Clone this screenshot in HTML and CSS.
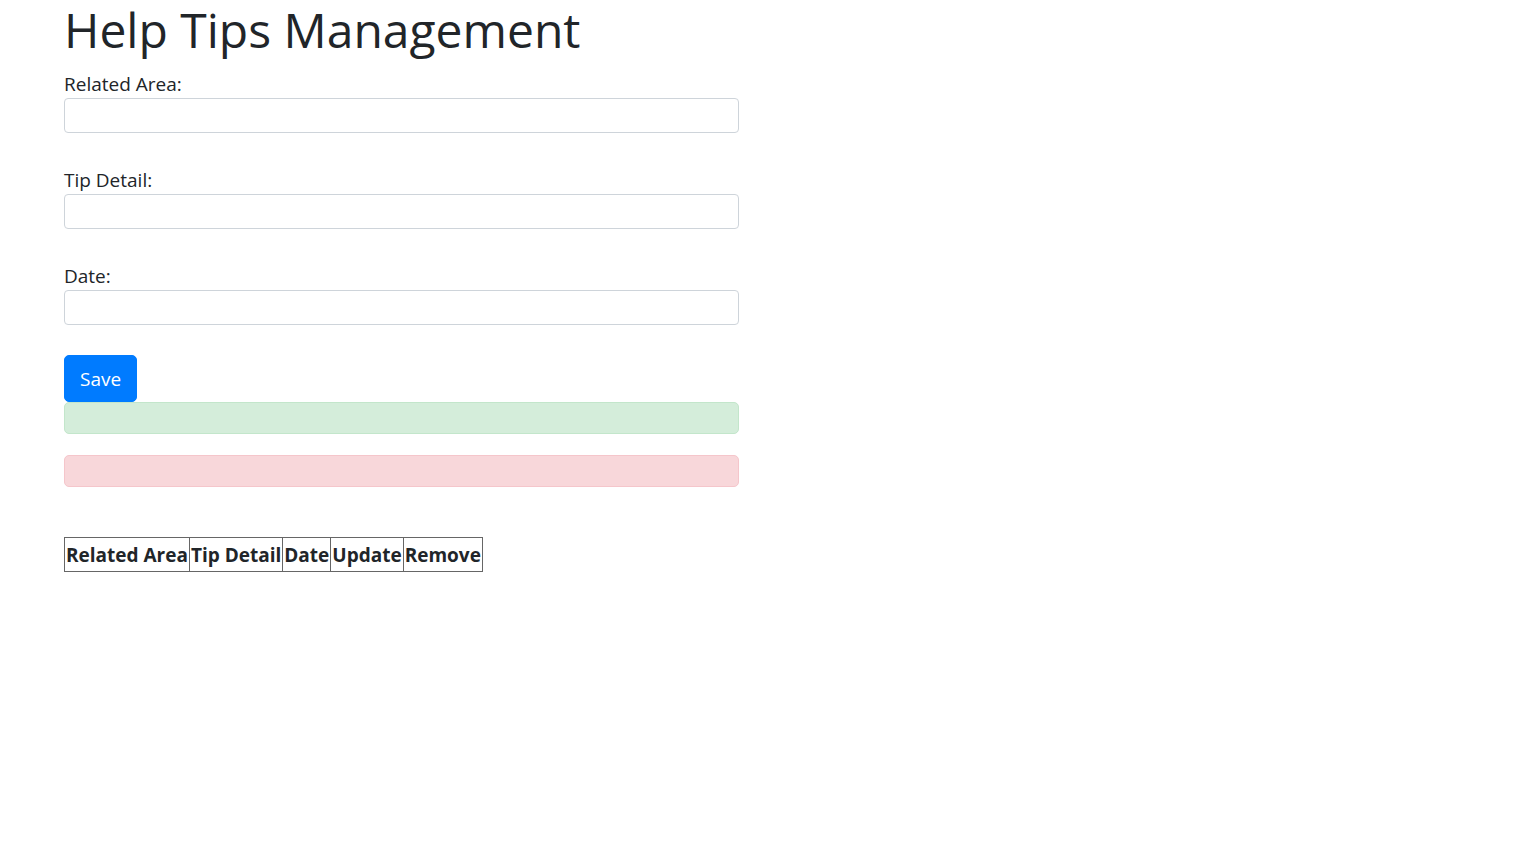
FILE: index.html
```html
<!DOCTYPE html>
<html lang="en">
<head>
<meta charset="utf-8">
<title>Help Tips Management</title>
<link rel="stylesheet" href="styles.css">
</head>
<body>
<div class="page">
  <h1 class="title">Help Tips Management</h1>
  <form class="tip-form">
    <div class="form-group">
      <label class="field-label" for="area">Related Area:</label>
      <input class="field-input" id="area" type="text">
    </div>
    <div class="form-group">
      <label class="field-label" for="detail">Tip Detail:</label>
      <input class="field-input" id="detail" type="text">
    </div>
    <div class="form-group">
      <label class="field-label" for="date">Date:</label>
      <input class="field-input" id="date" type="text">
    </div>
    <button class="btn-save" type="button">Save</button>
    <div class="alert alert-success"></div>
    <div class="alert alert-danger"></div>
  </form>
  <table class="tips-table">
    <thead>
      <tr>
        <th>Related Area</th>
        <th>Tip Detail</th>
        <th>Date</th>
        <th>Update</th>
        <th>Remove</th>
      </tr>
    </thead>
  </table>
</div>
</body>
</html>
```

FILE: styles.css
```css
html, body {
  margin: 0;
  padding: 0;
  background: #fff;
}
body {
  font-family: "Open Sans", "Noto Sans", sans-serif;
  color: #212529;
  font-size: 19px;
  line-height: 1.5;
}
.page {
  padding-left: 64px;
}
.title {
  margin: 0 0 10px 0;
  padding: 0;
  font-size: 48px;
  font-weight: 400;
  line-height: 60px;
}
.tip-form {
  width: 675px;
  display: flex;
  flex-direction: column;
  align-items: flex-start;
}
.form-group {
  width: 100%;
  display: flex;
  flex-direction: column;
  margin-bottom: 31px;
}
.form-group:first-child .field-label {
  margin-top: -2px;
}
.field-label {
  font-size: 19px;
  line-height: 30px;
  padding-top: 1px;
  margin-bottom: -1px;
}
.field-input {
  box-sizing: border-box;
  width: 100%;
  height: 35px;
  border: 1px solid #ced4da;
  border-radius: 4px;
  font: inherit;
  padding: 0 12px;
  margin: 0;
}
.btn-save {
  box-sizing: border-box;
  height: 47px;
  padding: 0 15px;
  background: #007bff;
  border: 1px solid #007bff;
  border-radius: 5px;
  color: #fff;
  font-family: inherit;
  font-size: 19px;
  line-height: 30px;
  margin: -1px 0 0 0;
}
.alert {
  box-sizing: border-box;
  width: 100%;
  height: 32px;
  border: 1px solid transparent;
  border-radius: 5px;
  margin-bottom: 21px;
}
.alert-success {
  background: #d4edda;
  border-color: #c3e6cb;
}
.alert-danger {
  background: #f8d7da;
  border-color: #f5c6cb;
  height: 32px;
}
.tips-table {
  margin-top: 29px;
  border-collapse: collapse;
  border: 1px solid #444;
}
.tips-table th {
  border: 1px solid #666;
  padding: 3px 1px 1px;
  font-weight: 700;
  font-size: 19px;
  line-height: 29px;
  text-align: center;
}
```
